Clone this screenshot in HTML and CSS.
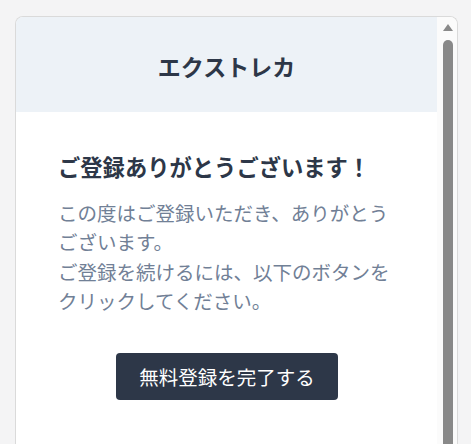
FILE: index.html
```html
<!DOCTYPE html>
<html lang="ja">
<head>
<meta charset="utf-8">
<link rel="stylesheet" href="styles.css">
<title>エクストレカ</title>
</head>
<body>
<div class="page">
  <div class="card">
    <div class="main">
      <header class="head">
        <h1 class="brand">エクストレカ</h1>
      </header>
      <section class="content">
        <h2 class="title">ご登録ありがとうございます！</h2>
        <p class="text">この度はご登録いただき、ありがとうございます。<br>ご登録を続けるには、以下のボタンをクリックしてください。</p>
        <div class="actions">
          <a class="btn">無料登録を完了する</a>
        </div>
      </section>
    </div>
    <div class="scrollbar">
      <svg class="arrow" width="10" height="7" viewBox="0 0 10 7"><path d="M5 0 L10 7 L0 7 Z" fill="#8a8a8a"/></svg>
      <div class="thumb"></div>
    </div>
  </div>
</div>
</body>
</html>
```
FILE: styles.css
```css
html, body {
  margin: 0;
  padding: 0;
  height: 100%;
  overflow: hidden;
  background: #f4f4f5;
  font-family: "Noto Sans CJK JP", "Noto Sans", sans-serif;
}
.page {
  padding: 16px 0 0 15px;
}
.card {
  width: 441px;
  height: 427px;
  border: 1px solid #dadada;
  border-bottom: none;
  border-radius: 8px 8px 0 0;
  background: #ffffff;
  display: flex;
  overflow: hidden;
}
.main {
  width: 421px;
  display: flex;
  flex-direction: column;
}
.head {
  height: 95px;
  background: #edf2f7;
  display: flex;
  align-items: center;
  justify-content: center;
  padding-top: 2px;
  box-sizing: border-box;
}
.brand {
  margin: 0;
  font-size: 23px;
  line-height: 32px;
  font-weight: 700;
  color: #2d3748;
}
.content {
  padding: 38px 41px 0 42px;
}
.title {
  margin: 0;
  font-size: 22.3px;
  line-height: 32px;
  font-weight: 700;
  color: #2d3748;
}
.text {
  margin: 16px 0 0;
  font-size: 19.5px;
  line-height: 29.3px;
  color: #718096;
}
.actions {
  margin-top: 38px;
  display: flex;
  justify-content: center;
}
.btn {
  display: inline-block;
  background: #2d3748;
  color: #ffffff;
  font-size: 19.5px;
  line-height: 29px;
  padding: 9px 23px;
  border-radius: 4px;
}
.scrollbar {
  width: 20px;
  background: #fbfbfb;
  display: flex;
  flex-direction: column;
  align-items: center;
  padding: 7px 0 0 1px;
  box-sizing: border-box;
}
.arrow {
  display: block;
}
.thumb {
  margin-top: 9px;
  width: 10px;
  flex: 1;
  background: #898989;
  border-radius: 5px 5px 0 0;
}
```
